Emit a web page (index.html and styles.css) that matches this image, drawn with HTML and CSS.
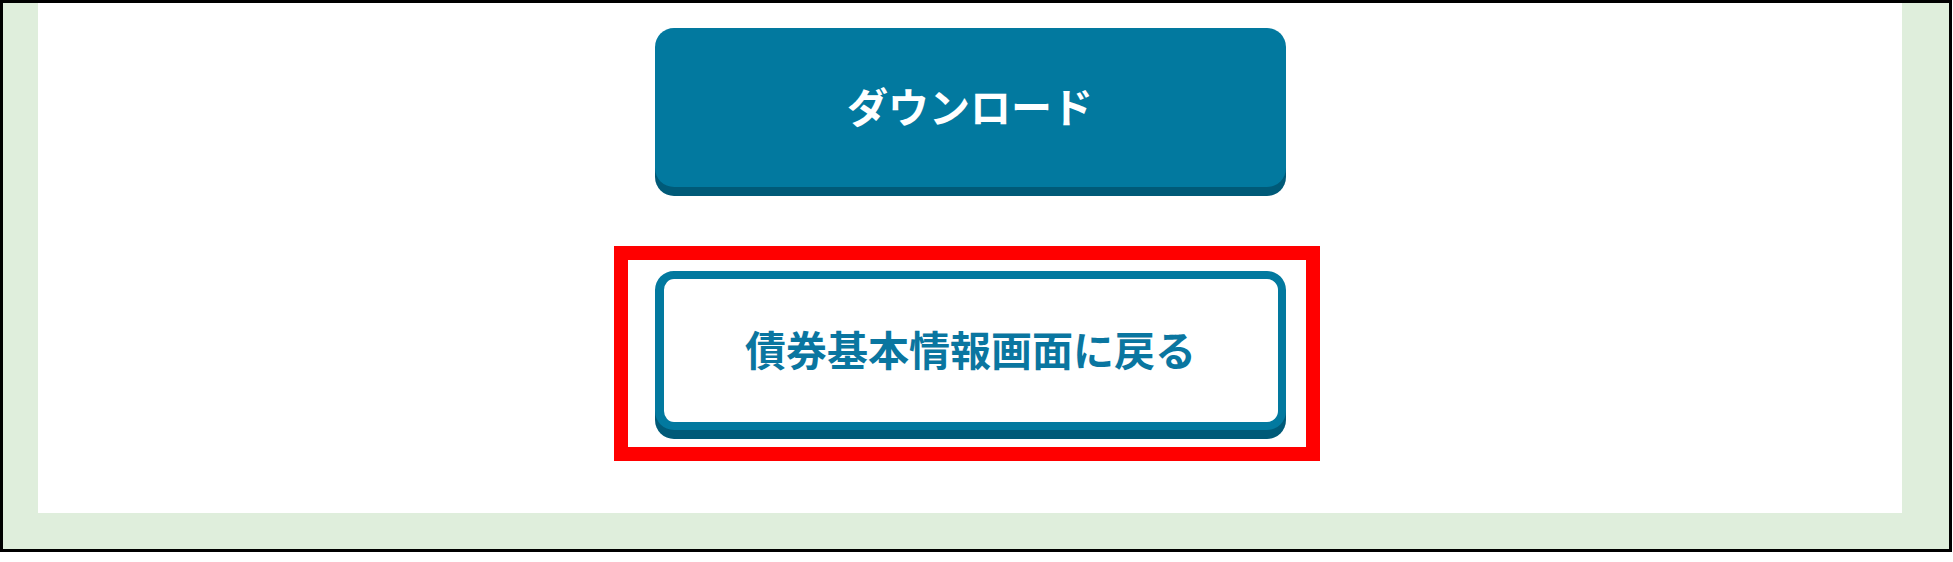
FILE: index.html
```html
<!DOCTYPE html>
<html lang="ja">
<head>
<meta charset="utf-8">
<title>債券基本情報</title>
<link rel="stylesheet" href="styles.css">
</head>
<body>
  <div class="frame">
    <div class="panel">
      <button class="btn btn-primary" type="button">ダウンロード</button>
      <div class="highlight-wrap">
        <button class="btn btn-secondary" type="button">債券基本情報画面に戻る</button>
        <div class="highlight"></div>
      </div>
    </div>
  </div>
</body>
</html>
```
FILE: styles.css
```css
html, body {
  margin: 0;
  padding: 0;
  background: #ffffff;
}

body {
  font-family: "Noto Sans CJK JP", "Noto Sans", sans-serif;
}

.frame {
  width: 1952px;
  height: 552px;
  box-sizing: border-box;
  border: 3px solid #000000;
  background: #dfeedc;
  padding: 0 47px 36px 35px;
  box-shadow: 0 1px 0 #9a9a9a;
}

.panel {
  height: 510px;
  background: #ffffff;
  display: flex;
  flex-direction: column;
  align-items: center;
  padding-top: 25px;
  box-sizing: border-box;
  gap: 84px;
}

.btn {
  width: 631px;
  height: 159px;
  box-sizing: border-box;
  border-radius: 19px;
  font-family: "Noto Sans CJK JP", "Noto Sans", sans-serif;
  font-weight: 700;
  font-size: 41px;
  line-height: 1;
  display: flex;
  align-items: center;
  justify-content: center;
  box-shadow: 0 9px 0 #005a78;
  cursor: pointer;
  margin: 0;
  padding: 0 0 5px 0;
}

.btn-primary {
  background: #02799f;
  color: #ffffff;
  border: none;
}

.btn-secondary {
  background: #ffffff;
  color: #0a76a0;
  border: 8px solid #02799f;
  border-left-width: 9px;
}

.highlight-wrap {
  position: relative;
}

.highlight {
  position: absolute;
  top: -25px;
  left: -41px;
  right: -34px;
  bottom: -31px;
  border: 14px solid #ff0000;
  pointer-events: none;
}
```
